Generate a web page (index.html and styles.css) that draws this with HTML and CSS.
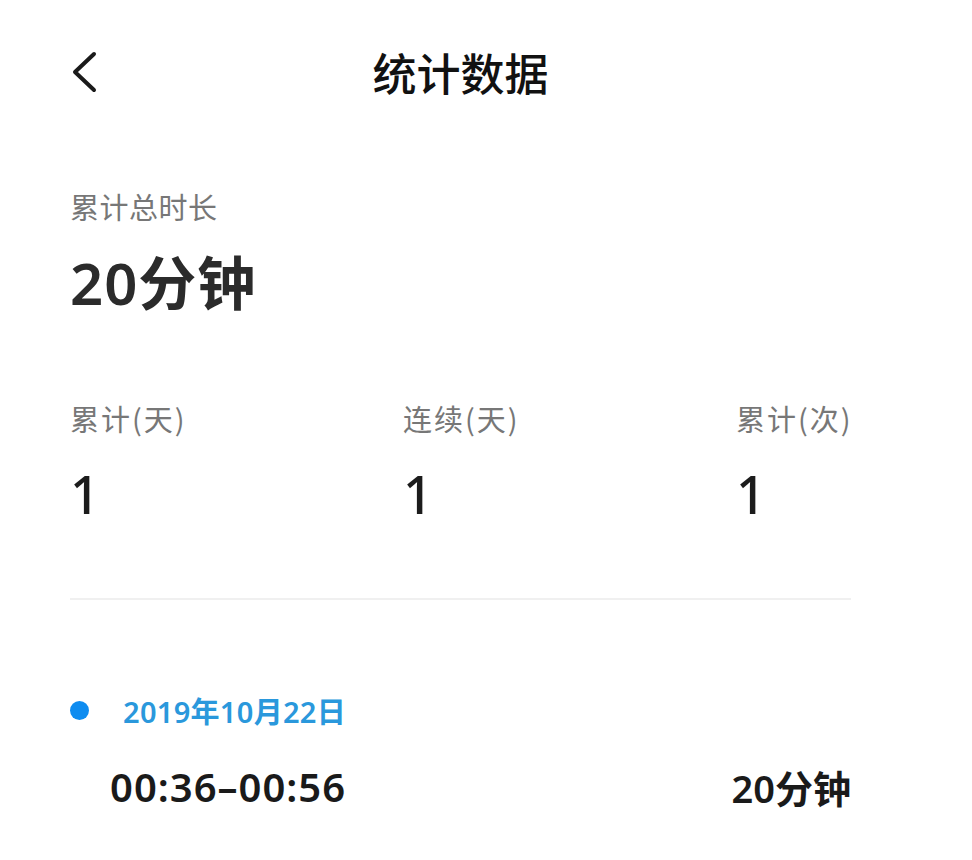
FILE: index.html
```html
<html>
    <head>
        <link rel="stylesheet" href="styles.css">
        <meta name="viewport" content="width=device-width, initial-scale=1.0">
        <title>统计数据</title>
    </head>
    <body>
        <div class="page">
            <div class="header">
                <a class="back">
                    <svg width="26" height="42" viewBox="0 0 26 42"><polyline points="22,3 3,21 22,39" fill="none" stroke="#1a1a1a" stroke-width="4" stroke-linecap="round" stroke-linejoin="round"/></svg>
                </a>
                <h1 class="title">统计数据</h1>
                <span></span>
            </div>

            <div class="summary">
                <p class="label">累计总时长</p>
                <p class="total">20分钟</p>
            </div>

            <div class="stats">
                <div class="stat">
                    <p class="label">累计(天)</p>
                    <p class="value">1</p>
                </div>
                <div class="stat">
                    <p class="label">连续(天)</p>
                    <p class="value">1</p>
                </div>
                <div class="stat">
                    <p class="label">累计(次)</p>
                    <p class="value">1</p>
                </div>
            </div>

            <div class="records">
                <div class="day">
                    <span class="dot"></span>
                    <span class="date">2019年10月22日</span>
                </div>
                <div class="record">
                    <span class="range">00:36–00:56</span>
                    <span class="length">20分钟</span>
                </div>
            </div>
        </div>
    </body>
</html>
```

FILE: styles.css
```css
body {
    margin: 0;
    background: #ffffff;
    font-family: "Noto Sans", "Noto Sans CJK SC", sans-serif;
    color: #222222;
}
p { margin: 0; white-space: nowrap; }

.page {
    width: 781px;
    padding-left: 70px;
}

.header {
    height: 144px;
    display: grid;
    grid-template-columns: 1fr auto 1fr;
    align-items: center;
}
.back { display: block; height: 42px; margin-left: 2px; margin-top: -1px; }
.back svg { display: block; }
.title {
    margin: 0;
    font-family: "Noto Sans CJK SC", sans-serif;
    font-size: 44px;
    font-weight: 500;
    line-height: 60px;
    color: #111111;
}

.label {
    font-family: "Noto Sans CJK SC", sans-serif;
    font-size: 29px;
    line-height: 40px;
    color: #777777;
    letter-spacing: 0.5px;
}
.stat .label { letter-spacing: 2px; }

.summary { margin-top: 42px; }
.total {
    margin-top: 22px;
    font-size: 58px;
    font-weight: 600;
    line-height: 70px;
    color: #2b2b2b;
    letter-spacing: 1px;
}
.total, .length { font-family: "Noto Sans", "Noto Sans CJK SC", sans-serif; }

.stats {
    margin-top: 80px;
    display: grid;
    grid-template-columns: 333px 333px 1fr;
    padding-bottom: 69px;
    border-bottom: 2px solid #f0f0f0;
}
.stat .value {
    margin-top: 21px;
    font-size: 52px;
    font-weight: 500;
    line-height: 70px;
    color: #1c1c1c;
}

.records { padding-top: 90px; }
.day {
    display: flex;
    align-items: center;
    height: 40px;
}
.dot {
    width: 19px;
    height: 19px;
    border-radius: 50%;
    background: #0e8cf0;
    margin-right: 34px;
}
.date {
    font-size: 29px;
    font-weight: 600;
    color: #2a98dc;
    letter-spacing: 0.3px;
}
.record {
    margin-top: 31px;
    height: 50px;
    padding-left: 40px;
    display: flex;
    align-items: center;
    justify-content: space-between;
    font-weight: 600;
    color: #1a1a1a;
}
.range { font-size: 40px; letter-spacing: 1px; }
.length { font-size: 38px; }
```
